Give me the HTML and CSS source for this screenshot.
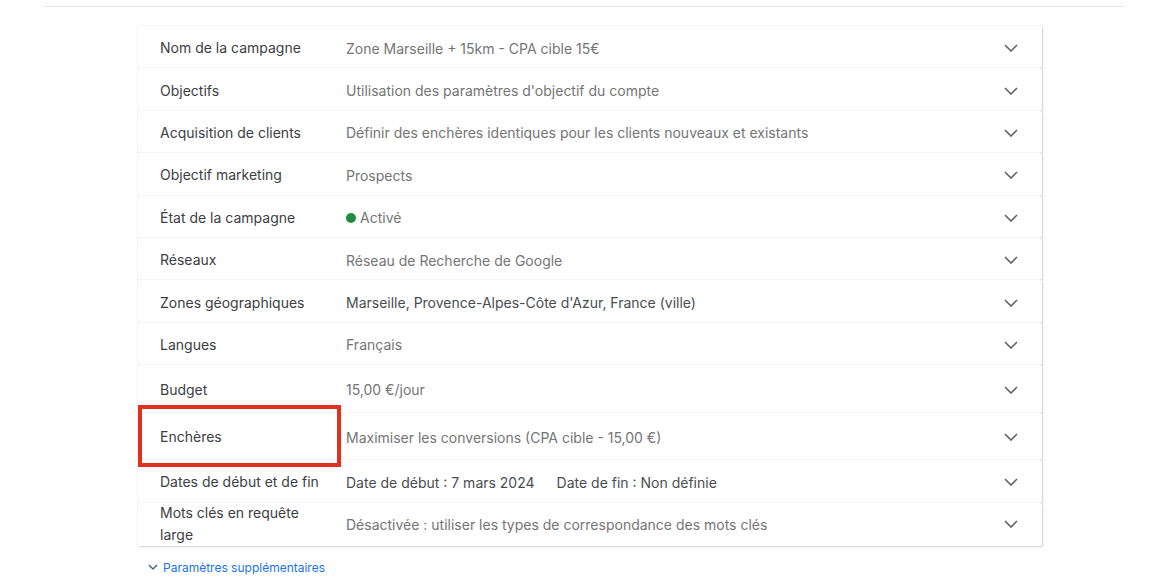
FILE: index.html
```html
<!DOCTYPE html>
<html lang="fr">
<head>
<meta charset="utf-8">
<title>Paramètres de la campagne</title>
<link rel="stylesheet" href="styles.css">
</head>
<body>
<div class="topline"></div>
<div class="panel">
  <div class="row"><div class="label">Nom de la campagne</div><div class="value">Zone Marseille + 15km - CPA cible 15€</div><svg class="chev" viewBox="0 0 14 8"><path d="M1 1l6 6 6-6"/></svg></div>
  <div class="row"><div class="label">Objectifs</div><div class="value">Utilisation des paramètres d'objectif du compte</div><svg class="chev" viewBox="0 0 14 8"><path d="M1 1l6 6 6-6"/></svg></div>
  <div class="row"><div class="label">Acquisition de clients</div><div class="value">Définir des enchères identiques pour les clients nouveaux et existants</div><svg class="chev" viewBox="0 0 14 8"><path d="M1 1l6 6 6-6"/></svg></div>
  <div class="row"><div class="label">Objectif marketing</div><div class="value">Prospects</div><svg class="chev" viewBox="0 0 14 8"><path d="M1 1l6 6 6-6"/></svg></div>
  <div class="row"><div class="label">État de la campagne</div><div class="value status"><span class="dot"></span>Activé</div><svg class="chev" viewBox="0 0 14 8"><path d="M1 1l6 6 6-6"/></svg></div>
  <div class="row"><div class="label">Réseaux</div><div class="value">Réseau de Recherche de Google</div><svg class="chev" viewBox="0 0 14 8"><path d="M1 1l6 6 6-6"/></svg></div>
  <div class="row"><div class="label">Zones géographiques</div><div class="value dark">Marseille, Provence-Alpes-Côte d'Azur, France (ville)</div><svg class="chev" viewBox="0 0 14 8"><path d="M1 1l6 6 6-6"/></svg></div>
  <div class="row"><div class="label">Langues</div><div class="value">Français</div><svg class="chev" viewBox="0 0 14 8"><path d="M1 1l6 6 6-6"/></svg></div>
  <div class="row tall"><div class="label">Budget</div><div class="value">15,00 €/jour</div><svg class="chev" viewBox="0 0 14 8"><path d="M1 1l6 6 6-6"/></svg></div>
  <div class="row tall"><div class="label">Enchères</div><div class="value">Maximiser les conversions (CPA cible - 15,00 €)</div><svg class="chev" viewBox="0 0 14 8"><path d="M1 1l6 6 6-6"/></svg><div class="highlight"></div></div>
  <div class="row"><div class="label">Dates de début et de fin</div><div class="value dark dates"><span>Date de début : 7 mars 2024</span><span>Date de fin : Non définie</span></div><svg class="chev" viewBox="0 0 14 8"><path d="M1 1l6 6 6-6"/></svg></div>
  <div class="row last"><div class="label">Mots clés en requête large</div><div class="value">Désactivée : utiliser les types de correspondance des mots clés</div><svg class="chev" viewBox="0 0 14 8"><path d="M1 1l6 6 6-6"/></svg></div>
</div>
<div class="more"><svg class="morechev" viewBox="0 0 10 6"><path d="M1 1l4 4 4-4"/></svg><span>Paramètres supplémentaires</span></div>
</body>
</html>
```

FILE: styles.css
```css
html, body {
  margin: 0;
  padding: 0;
  background: #ffffff;
}
body {
  font-family: Inter, "Noto Sans", sans-serif;
  width: 1168px;
  height: 581px;
  overflow: hidden;
  padding-top: 6px;
  box-sizing: border-box;
}
.topline {
  margin-left: 43px;
  width: 1082px;
  height: 1px;
  background: #e6e6e6;
}
.panel {
  margin: 19px 0 0 138px;
  width: 904px;
  display: flex;
  flex-direction: column;
}
.row {
  position: relative;
  display: flex;
  align-items: center;
  height: 42.4px;
  box-sizing: border-box;
  padding: 2px 24px 0 22px;
  background: #fff;
  box-shadow: 0 0 0 1px rgba(0,0,0,0.035), 1px 1px 2px rgba(0,0,0,0.16);
  border-radius: 2px;
}
.row.tall {
  height: 47.5px;
}
.row.last {
  height: 43px;
  padding-top: 0;
}
.label {
  width: 170px;
  flex: 0 0 170px;
  margin-right: 16px;
  font-size: 14px;
  line-height: 22px;
  color: #3c4043;
}
.value {
  flex: 1;
  font-size: 14px;
  color: #757575;
}
.value.dark {
  color: #4a4d50;
}
.status {
  display: flex;
  align-items: center;
}
.dot {
  width: 10px;
  height: 10px;
  border-radius: 50%;
  background: #1e8e3e;
  margin-right: 4px;
}
.dates {
  display: flex;
  gap: 22px;
}
.chev {
  width: 14px;
  height: 8px;
  fill: none;
  stroke: #5f6368;
  stroke-width: 1.6;
}
.highlight {
  position: absolute;
  z-index: 2;
  left: 0;
  top: -8px;
  width: 203px;
  height: 62px;
  box-sizing: border-box;
  border: 4px solid #e1301f;
}
.more {
  display: flex;
  align-items: center;
  margin: 14px 0 0 148px;
  font-size: 12px;
  color: #1a73e8;
}
.morechev {
  width: 10px;
  height: 6px;
  fill: none;
  stroke: #44608c;
  stroke-width: 1.4;
  margin-right: 5px;
}
```
